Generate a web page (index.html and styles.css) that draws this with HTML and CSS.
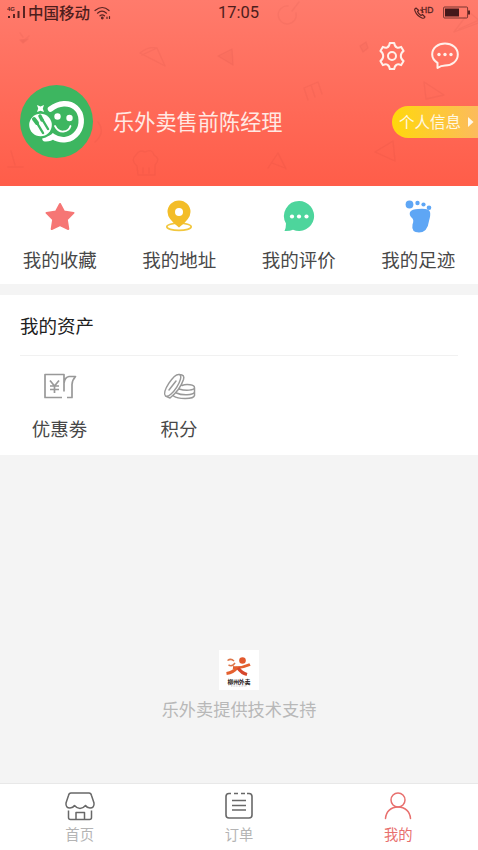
FILE: index.html
```html
<!DOCTYPE html>
<html lang="zh-CN">
<head>
<meta charset="utf-8">
<title>我的</title>
<link rel="stylesheet" href="styles.css">
</head>
<body>
<div class="app">
  <header class="hero">
    <svg class="hero-pattern" width="478" height="186" viewBox="0 0 478 186" fill="none" stroke="#a03030" stroke-opacity=".12" stroke-width="1.3" stroke-linecap="round" stroke-linejoin="round">
      <path d="M20 33l3 4M29 36l-7 6M20 40l3 3 5-4z" fill="#a03030" fill-opacity=".12"/>
      <path d="M140 53q8-7 17-5l8 18zM142 55l15-7"/>
      <path d="M218 56l14-7 1 16z" fill="#a03030" fill-opacity=".08"/>
      <path d="M288 6a9 9 0 1 0 8 7M292 11l7-9"/>
      <path d="M454 32l15-20 12 10zM459 29l20-9"/>
      <path d="M360 46l6-4 2 6-5 4z" fill="#a03030" fill-opacity=".08"/>
      <path d="M304 88l4 12M311 85l4 12M318 82l4 12M304 88l14-6"/>
      <path d="M424 82l20 13-18 4zM375 152l18-11 2 20z"/>
      <path d="M137 166q-7-6-1-11 3-6 9-3 7-4 9 3 7 4 1 10v10h-17zM143 168v5M149 168v5"/>
      <path d="M268 168l10-15 8 16M272 163l13 5M98 122q8 10-3 20M11 151l4 14M8 167h15"/>
    </svg>
    <div class="status">
      <svg class="signal" width="20" height="14" viewBox="0 0 20 14" fill="#592422"><text x="0" y="5" font-size="6" font-family="Liberation Sans" font-weight="700">4G</text><path d="M1 10h2v2H1zM6 8h2v4H6zM10.500 5h2v7h-2zM16 0h2v12h-2z"/></svg>
      <span class="carrier">中国移动</span>
      <svg class="wifi" width="18" height="14" viewBox="0 0 18 14" fill="none" stroke="#592422" stroke-width="1.2" stroke-linecap="round"><path d="M1 4.500q7.500-6 14 0M3.500 7.200q4.500-4 9 0M6 9.800q2.200-2 4.500 0"/><circle cx="8.300" cy="12" r=".8" fill="#592422"/><path d="M13 12.500v-1.500M15.500 12.500v-2"/></svg>
      <span class="clock">17:05</span>
      <svg class="call" width="22" height="16" viewBox="0 0 22 16"><path d="M3 3q-2 1-1 3 2 5 7 7 2 .8 3-1L9.500 9.500 8 10.500Q5.500 9 4.500 6.500l1.300-1zM7 5q3-.5 3 3" fill="none" stroke="#592422" stroke-width="1.100" stroke-linejoin="round"/><text x="8" y="8" font-size="8.500" font-family="Liberation Sans" fill="#592422" stroke="#592422" stroke-width=".3">HD</text></svg>
      <svg class="battery" width="28" height="14" viewBox="0 0 28 14"><rect x=".6" y="1" width="24" height="11" rx="1" fill="none" stroke="#592422" stroke-opacity=".8"/><path d="M2 2.500h14v8H2z" fill="#45181a"/><path d="M25 4.500h2v4h-2z" fill="#592422"/></svg>
    </div>
    <div class="tools">
      <svg width="30" height="30" viewBox="0 0 30 30" fill="none" stroke="#fff0ea" stroke-width="2" stroke-linejoin="round"><path d="M12.800 2h4.400q.5 3.500 2.500 4.300 1.500.9 4.500-.4l2.400 4q-2.800 2-2.800 5.100t2.800 5.100l-2.400 4q-3-1.300-4.500-.4-2 .8-2.500 4.300h-4.400q-.5-3.500-2.500-4.300-1.500-.9-4.500.4l-2.400-4q2.800-2 2.800-5.100T3.400 9.900l2.400-4q3 1.300 4.500.4 2-.8 2.500-4.300z"/><circle cx="15" cy="15" r="4"/></svg>
      <svg width="30" height="30" viewBox="0 0 30 30" fill="none" stroke="#fff0ea" stroke-width="2" stroke-linejoin="round"><path d="M7.500 27v-5.200C4 19.600 2.200 16.800 2.200 13.500 2.200 7 8 2.500 15 2.500s12.800 4.500 12.800 11-5.800 11-12.800 11q-4 0-7.500 2.500z"/><g fill="#fff0ea" stroke="none"><circle cx="9" cy="13.500" r="1.700"/><circle cx="15" cy="13.500" r="1.700"/><circle cx="21" cy="13.500" r="1.700"/></g></svg>
    </div>
    <div class="profile">
      <svg class="avatar" width="74" height="74" viewBox="0 0 74 74"><circle cx="36.500" cy="36.500" r="36.500" fill="#3db660"/><path d="M29 24Q35 17 44 17.500A20.500 20.500 0 0 1 44 58.500Q37 58.500 32 56 25 57 20 53l13-5" fill="none"/><path d="M30.500 24C39 17.500 49 17 55.500 22.500c7 6 7.500 17.500 2 25C51.500 55.500 41 57 33 51.500q-3 2.500-8 2.200" fill="none" stroke="#fff" stroke-width="5.500" stroke-linecap="round"/><circle cx="20.500" cy="40" r="13.500" fill="#3db660"/><circle cx="20.500" cy="40" r="11.300" fill="#fff"/><g stroke="#3db660" stroke-linecap="round"><path d="M17 38l6 10" stroke-width="2.400"/><path d="M22 34l6 10" stroke-width="2.400"/><path d="M14 34l3 4" stroke-width="4"/><path d="M20 31l2 4" stroke-width="3.500"/></g><circle cx="37.500" cy="31.500" r="3.200" fill="#fff"/><circle cx="49.500" cy="33" r="3.200" fill="#fff"/><path d="M35 41q3 6 8.500 5.500 5.500-.5 7-5.500" stroke="#fff" stroke-width="1.800" fill="none" stroke-linecap="round"/><path d="M17 20l3.500 1.500L24 20l-1.200 3.500L24 27l-3.500-1.300L17 27l1.200-3.500z" fill="#fff"/></svg>
      <span class="nickname">乐外卖售前陈经理</span>
      <a class="info"><span>个人信息</span><svg width="6" height="10" viewBox="0 0 6 10"><path d="M0 0l5.500 5L0 10z" fill="#fff8e8"/></svg></a>
    </div>
  </header>

  <nav class="quick">
    <a><svg width="36" height="36" viewBox="0 0 36 36"><path d="M18 6l4 7.500 9.500 1.400-6.700 6.600 1.500 9.500L18 27l-8.300 4 1.500-9.500-6.700-6.600L14 13.500z" fill="#f67675" stroke="#f67675" stroke-width="2" stroke-linejoin="round"/></svg><span>我的收藏</span></a>
    <a><svg width="36" height="36" viewBox="0 0 36 36"><ellipse cx="18" cy="28.800" rx="12.200" ry="3.600" fill="none" stroke="#f2c73e" stroke-width="1.700"/><path d="M18 29.500q-11.500-8.500-11.500-15.500a11.500 11.500 0 0 1 23 0Q29.500 21 18 29.500z" fill="#f3bd28"/><circle cx="18" cy="14" r="4" fill="#fff"/></svg><span>我的地址</span></a>
    <a><svg width="36" height="36" viewBox="0 0 36 36"><path d="M18 3a15 15 0 1 1-6 28.700q-3 1.500-8.500 1.300Q5 30 5 25.500A15 15 0 0 1 18 3z" fill="#4dd59c"/><g fill="#fff"><circle cx="11" cy="18.500" r="2.100"/><circle cx="18" cy="18.500" r="2.100"/><circle cx="25.500" cy="18.500" r="2.100"/></g></svg><span>我的评价</span></a>
    <a><svg width="36" height="36" viewBox="0 0 36 36" fill="#5ea6f5"><circle cx="9.500" cy="6.500" r="3.900"/><circle cx="17.500" cy="5" r="2.200"/><circle cx="23.500" cy="6.500" r="2.100"/><circle cx="29" cy="9.800" r="2.300"/><path d="M10 14q2-3 8-3 11-1 12 3 .8 3-1 9-1.500 11.500-10 11.500-8 0-6.500-8 2-5-1-7-2.500-2.500-1.500-5.500z"/></svg><span>我的足迹</span></a>
  </nav>

  <section class="assets">
    <h2>我的资产</h2>
    <div class="asset-list">
      <a><svg width="36" height="30" viewBox="0 0 36 30" fill="none" stroke="#999" stroke-width="1.700" stroke-linejoin="round"><path d="M20 26.500H3V3.500h19v17M22 12q1-6 5-6.500h6.500q-3.500 4-3.500 8v13H25M8 9.500l4.500 5.500L17 9.500M12.500 15v7M8 15h9M8 18.500h9"/></svg><span>优惠劵</span></a>
      <a><svg width="36" height="30" viewBox="0 0 36 30" fill="none" stroke="#999" stroke-width="1.500" stroke-linecap="round" stroke-linejoin="round"><path d="M4.500 25C.5 21 13 2 18.500 3.500 24 6 10 28 4.500 25zM18.500 3.500q5.500 0 4 5Q19 19 9 27L4.500 25M8 19l7-9M21 14.500c5-2 12.500-.5 12.500 2 0 3-9 3.500-15.500 1.500M33.500 17v4c-1 3.500-13 3.500-18 1M33.500 21v3.500c-1 4-16 4-21 .5"/></svg><span>积分</span></a>
    </div>
  </section>

  <main class="support">
    <svg width="40" height="40" viewBox="0 0 40 40"><path d="M0 0h40v40H0z" fill="#fff"/><circle cx="23.500" cy="10.500" r="3.300" fill="#e2592e"/><path d="M8.500 10.500q3.500-2.500 6.500.5M9.500 15q4 2 6.500-2" fill="none" stroke="#dd7548" stroke-width="1.500"/><path d="M7.500 23.500q7-1 11-6.500M14 17.500q8 1 17-3" fill="none" stroke="#e4602f" stroke-width="3"/><path d="M19 18q3.500 5 9 6.500" fill="none" stroke="#d6462c" stroke-width="3.200"/><text x="20" y="33.500" text-anchor="middle" textLength="23" font-size="6" font-family="Noto Sans CJK SC" font-weight="700" fill="#262020">柳州外卖</text><path d="M12 36h16" stroke="#bbb" stroke-width=".8" stroke-dasharray="1 .6"/></svg>
    <p>乐外卖提供技术支持</p>
  </main>

  <footer class="tabs">
    <a><svg width="32" height="30" viewBox="0 0 32 30" fill="none" stroke="#686868" stroke-width="1.500" stroke-linejoin="round"><path d="M7 2h18q2 0 2.500 2.500L30 12q.5 5-4 5-3 0-4.500-2.500Q19 17.500 16 17.500t-5.500-3Q9 17 6 17 1.500 17 2 12l2.500-7.500Q5 2 7 2zM4.500 19.500v7q0 2 2 2h19q2 0 2-2v-7M12 28.500V21.500h8.500v7"/></svg><span>首页</span></a>
    <a><svg width="32" height="30" viewBox="0 0 32 30" fill="none" stroke="#686868" stroke-width="1.600"><path d="M8 2.500H6Q3 2.500 3 5.500V24q0 3 3 3h20q3 0 3-3V5.500q0-3-3-3h-2M11 2.500h4M18 2.500h4M9 9.500h14M9 14.500h14M9 19h14"/></svg><span>订单</span></a>
    <a class="active"><svg width="32" height="30" viewBox="0 0 32 30" fill="none" stroke="#e8706e" stroke-width="1.500" stroke-linecap="round"><circle cx="16" cy="9" r="7"/><path d="M3.500 27.500C4 20.500 9 16 16 16s12 4.500 12.500 11.500"/></svg><span>我的</span></a>
  </footer>
</div>
</body>
</html>
```
FILE: styles.css
```css
* { box-sizing: border-box; }
body { margin: 0; background: #f4f4f4; font-family: "Noto Sans CJK SC", sans-serif; color: #484848; }
svg { display: block; flex: none; }
.app { width: 478px; height: 850px; display: flex; flex-direction: column; overflow: hidden; }

.hero { position: relative; height: 186px; background: linear-gradient(#ff7b6c, #ff5d49); }
.hero-pattern { position: absolute; left: 0; top: 0; opacity: .55; }
.status { height: 26px; display: flex; align-items: center; padding: 0 7px; color: #4d1d1c; }
.carrier { font-size: 15.500px; line-height: 24px; margin-left: 1px; padding-bottom: 2px; font-weight: 500; }
.wifi { margin-left: 4px; }
.clock { font: 16.500px/26px Roboto, sans-serif; margin-left: 106px; width: 60px; }
.call { margin-left: auto; }
.battery { margin-left: 8px; }
.tools { height: 59px; display: flex; justify-content: flex-end; align-items: center; gap: 23px; padding-right: 18px; }
.profile { display: flex; align-items: center; height: 74px; padding-left: 20px; }
.nickname { margin-left: 19px; font-size: 21.200px; line-height: 30px; padding-bottom: 2px; color: #ffe9e3; }
.info { margin-left: auto; width: 86px; height: 32px; border-radius: 16px 0 0 16px; background: linear-gradient(90deg, #ffd80c, #fcbb5d); color: #fff8e4; display: flex; align-items: center; padding-left: 7px; gap: 7px; font-size: 15.500px; line-height: 30px; }
.info span { padding-bottom: 2px; }

.quick { height: 98px; background: #fff; display: flex; }
.quick a { flex: 1; display: flex; flex-direction: column; align-items: center; padding-top: 12px; }
.quick span { font-size: 18.500px; line-height: 26px; margin-top: 12px; }

.assets { margin-top: 11px; height: 160px; background: #fff; padding: 0 20px; }
.assets h2 { margin: 0; height: 61px; border-bottom: 1px solid #f1f1f1; font-size: 18.500px; line-height: 61px; font-weight: 400; color: #202020; }
.asset-list { display: flex; }
.asset-list a { width: 120px; display: flex; flex-direction: column; align-items: center; padding-top: 15px; }
.asset-list a:first-child { width: 79px; }
.asset-list a + a { width: 80px; margin-left: 40px; }
.asset-list span { font-size: 18.500px; line-height: 26px; margin-top: 14px; }

.support { flex: 1; display: flex; flex-direction: column; align-items: center; justify-content: flex-end; padding-bottom: 61px; }
.support p { margin: 6px 0 0; font-size: 17.200px; line-height: 26px; color: #b8b8b8; }

.tabs { height: 67px; background: #fff; border-top: 1px solid #e8e8e8; display: flex; }
.tabs a { flex: 1; display: flex; flex-direction: column; align-items: center; padding-top: 7px; font-size: 14.300px; line-height: 20px; color: #b4b4b4; }
.tabs span { margin-top: 3px; }
.tabs .active { color: #e8706e; }
```
